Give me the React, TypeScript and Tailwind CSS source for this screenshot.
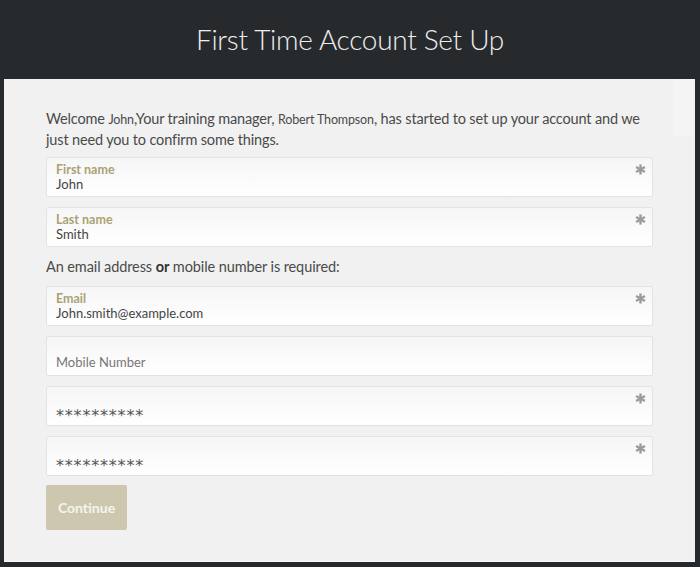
import { ReactNode } from 'react';

const font = { fontFamily: 'Lato, "Open Sans", sans-serif' };

const Required = () => (
  <svg viewBox="0 0 12 12" className="absolute right-[6px] top-[6px] w-[11px] h-[11px]">
    <g stroke="#9b9b9b" strokeWidth="2.6" strokeLinecap="butt">
      <line x1="6" y1="0.5" x2="6" y2="11.5" />
      <line x1="1.2" y1="3.2" x2="10.8" y2="8.8" />
      <line x1="1.2" y1="8.8" x2="10.8" y2="3.2" />
    </g>
  </svg>
);

interface FieldProps {
  label?: string;
  required?: boolean;
  children: ReactNode;
}

const Field = ({ label, required, children }: FieldProps) => (
  <div className="relative h-[40px] rounded-[2px] border border-[#e3e3e3] bg-gradient-to-b from-[#f6f6f6] to-white px-[9px] pt-[5px]">
    <div className="h-[14px] text-[12.5px] font-bold leading-[14px] text-[#aba274]">{label}</div>
    <div className="text-[13px] leading-[15px] text-[#444]">{children}</div>
    {required && <Required />}
  </div>
);

const Stars = () => (
  <span
    className="relative top-[2px] text-[16px] leading-[15px] tracking-[0.8px] text-[#555]"
    style={{ fontFamily: '"DejaVu Sans", sans-serif' }}
  >
    **********
  </span>
);

export default function App() {
  return (
    <div className="w-[700px] h-[567px] bg-[#262a2d] overflow-hidden" style={font}>
      {/* Header */}
      <div className="h-[79px] flex items-center justify-center">
        <h1 className="text-[28px] font-light text-[#eeeeee] tracking-[-0.3px] pb-[1px]">First Time Account Set Up</h1>
      </div>

      {/* Panel */}
      <div className="relative mx-[4px] mr-[5px] h-[483px] border-b border-[#fafafa] bg-[#f1f1f1] px-[42px] pt-[30px]">
        <div className="absolute right-[1px] top-0 w-[21px] h-[57px] bg-[#f4f4f4]" />

        <p className="relative text-[14.5px] leading-[20px] tracking-[-0.15px] text-[#4a4a4a]">
          <span className="whitespace-nowrap">
            Welcome <span className="text-[12.5px]">John</span>,Your training manager,{' '}
            <span className="text-[12.5px]">Robert Thompson</span>, has started to set up your account and we
          </span>
          <br />
          just need you to confirm some things.
        </p>

        <div className="mt-[7px] flex flex-col gap-[10px]">
          <Field label="First name" required>John</Field>
          <Field label="Last name" required>Smith</Field>
        </div>

        <p className="mt-[10px] mb-[9px] text-[14.5px] leading-[20px] tracking-[-0.1px] text-[#4a4a4a]">
          An email address <b className="font-bold text-[#333]">or</b> mobile number is required:
        </p>

        <div className="flex flex-col gap-[10px]">
          <Field label="Email" required>John.smith@example.com</Field>
          <Field>
            <span className="relative top-[-1px] text-[#777]">Mobile Number</span>
          </Field>
          <Field required>
            <Stars />
          </Field>
          <Field required>
            <Stars />
          </Field>
        </div>

        <button className="mt-[9px] h-[45px] w-[81px] rounded-[2px] bg-[#ccc7ae] text-[14px] font-bold text-[#f6f5ef]">
          Continue
        </button>
      </div>
    </div>
  );
}
